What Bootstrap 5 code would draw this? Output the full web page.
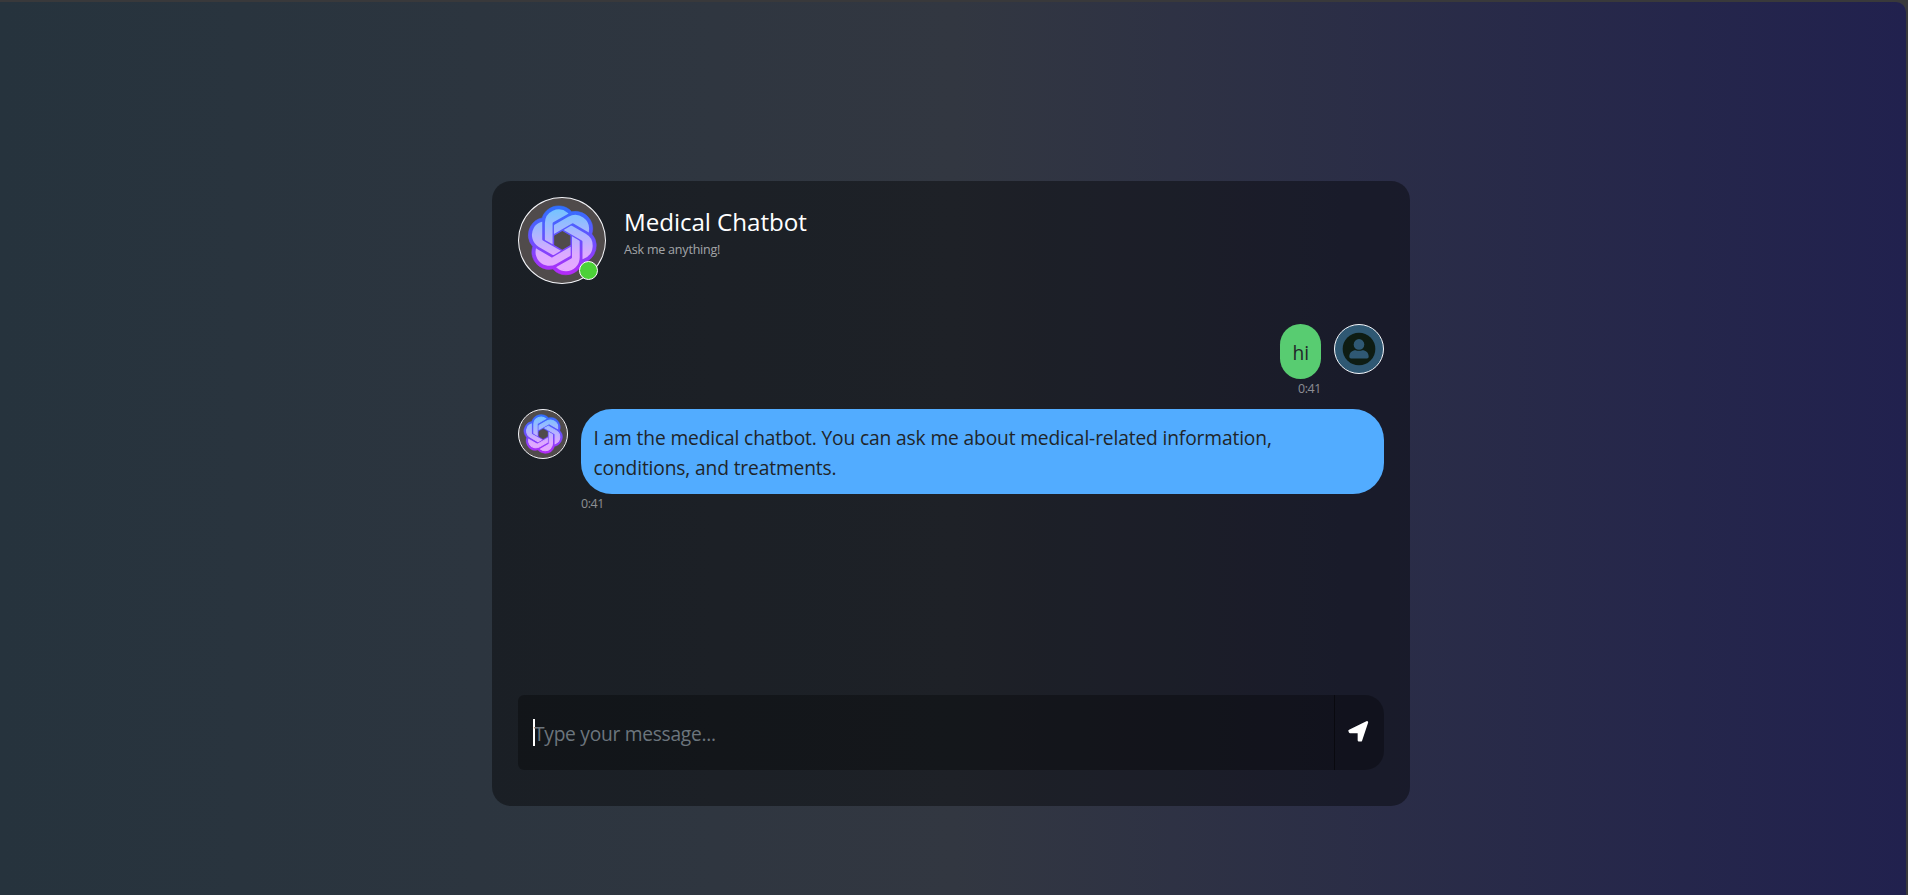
<!DOCTYPE html>
<html lang="en">
<head>
<meta charset="utf-8">
<title>Medical Chatbot</title>
<meta name="viewport" content="width=device-width, initial-scale=1">
<link rel="stylesheet" href="https://cdn.jsdelivr.net/npm/bootstrap@5.3.0/dist/css/bootstrap.min.css">
<style>
html,body{height:100%;overflow:hidden}
body{background:#39393b;font-family:"Open Sans","Noto Sans",sans-serif;color:#212529}
.page{height:895px;padding-top:2px;padding-right:2px}
.stage{height:893px;border-radius:0 10px 0 0;background:linear-gradient(to right,rgb(38,51,61),rgb(50,55,65),rgb(33,33,78));padding:179px 0 0 492px}
.chat{width:918px;height:625px;border-radius:19px;background:rgba(0,0,0,.4);border:0;padding:16px 26px 36px}
.av{border:1.5px solid #f5f6fa;border-radius:50%;background:#504b4b;overflow:hidden;flex:none;display:block}
.av-lg{width:88px;height:87px}
.av-sm{width:50px;height:50px}
.av-user{background:#2f5873}
.dot{position:absolute;right:8px;bottom:4px;width:19px;height:19px;border-radius:50%;background:#4cd137;border:1.5px solid #fff}
.heading{margin-left:18px}
.title{font-size:24.2px;line-height:30px;color:#fff;margin-top:10px;white-space:nowrap;letter-spacing:-.07px}
.sub{font-size:12.5px;line-height:18px;color:rgba(255,255,255,.6);margin-top:4px;letter-spacing:-.2px}
.row-me{margin-top:40px}
.row-bot{margin-top:12px}
.bubble{font-size:19.2px;line-height:30px;padding:13.5px 12.5px 11.5px;border-radius:31px;letter-spacing:-.135px;white-space:nowrap}
.me{background:#58cc71;margin-right:13px;width:41px}
.bot{background:#52acff;margin-left:13px;width:803px;height:85px}
.time{font-size:12.4px;line-height:18px;color:rgba(255,255,255,.5);letter-spacing:-.4px;height:18px;padding-top:1px}
.time-me{margin-right:13px}
.time-bot{margin-left:13px}
.inbox{height:75px;border-radius:6px 19px 19px 6px;background:rgba(0,0,0,.3);overflow:hidden}
.field{font-size:19.2px;color:#6c757d;padding:4px 0 0 15px;letter-spacing:-.27px}
.field .caret+span{margin-left:-1px}
.caret{width:2px;height:27px;background:#fff;margin-top:-5px}
.send{width:50px;border-left:1px solid rgba(0,0,0,.45)}
.send svg{margin:-3px 1px 0 0}
</style>
</head>
<body>
<svg width="0" height="0" class="position-absolute" aria-hidden="true">
<defs>
<linearGradient id="light" gradientUnits="userSpaceOnUse" x1="0" y1="0" x2="0" y2="24"><stop offset="0" stop-color="#6cc6ff"/><stop offset=".7" stop-color="#dcaaff"/><stop offset="1" stop-color="#eaa8ff"/></linearGradient>
<linearGradient id="dark" gradientUnits="userSpaceOnUse" x1="0" y1="0" x2="0" y2="24"><stop offset="0" stop-color="#2f70ff"/><stop offset=".5" stop-color="#6a50ff"/><stop offset="1" stop-color="#b52af8"/></linearGradient>
<symbol id="knot" viewBox="-2.9 -2.75 29.6 29.6">
<path fill="url(#dark)" stroke="url(#dark)" stroke-width=".2" d="M22.2819 9.8211a5.9847 5.9847 0 0 0-.5157-4.9108 6.0462 6.0462 0 0 0-6.5098-2.9A6.0651 6.0651 0 0 0 4.9807 4.1818a5.9847 5.9847 0 0 0-3.9977 2.9 6.0462 6.0462 0 0 0 .7427 7.0966 5.98 5.98 0 0 0 .511 4.9107 6.051 6.051 0 0 0 6.5146 2.9001A5.9847 5.9847 0 0 0 13.2599 24a6.0557 6.0557 0 0 0 5.7718-4.2058 5.9894 5.9894 0 0 0 3.9977-2.9001 6.0557 6.0557 0 0 0-.7475-7.0729z"/>
<path fill="url(#light)" stroke="url(#light)" stroke-width=".62" d="M13.2599 22.4292a4.4755 4.4755 0 0 1-2.8764-1.0408l.1419-.0804 4.7783-2.7582a.7948.7948 0 0 0 .3927-.6813v-6.7369l2.02 1.1686a.071.071 0 0 1 .038.052v5.5826a4.504 4.504 0 0 1-4.4945 4.4944zm-9.6607-4.1254a4.4708 4.4708 0 0 1-.5346-3.0137l.142.0852 4.783 2.7582a.7712.7712 0 0 0 .7806 0l5.8428-3.3685v2.3324a.0804.0804 0 0 1-.0332.0615L9.74 19.9502a4.4992 4.4992 0 0 1-6.1408-1.6464zM2.3408 7.8956a4.485 4.485 0 0 1 2.3655-1.9728V11.6a.7664.7664 0 0 0 .3879.6765l5.8144 3.3543-2.0201 1.1685a.0757.0757 0 0 1-.071 0l-4.8303-2.7865A4.504 4.504 0 0 1 2.3408 7.872zm16.5963 3.8558L13.1038 8.364 15.1192 7.2a.0757.0757 0 0 1 .071 0l4.8303 2.7913a4.4944 4.4944 0 0 1-.6765 8.1042v-5.6772a.79.79 0 0 0-.407-.667zm2.0107-3.0231l-.142-.0852-4.7735-2.7818a.7759.7759 0 0 0-.7854 0L9.409 9.2297V6.8974a.0662.0662 0 0 1 .0284-.0615l4.8303-2.7866a4.4992 4.4992 0 0 1 6.6802 4.66zM8.3065 12.863l-2.02-1.1638a.0804.0804 0 0 1-.038-.0567V6.0742a4.4992 4.4992 0 0 1 7.3757-3.4537l-.142.0805L8.704 5.459a.7948.7948 0 0 0-.3927.6813z"/>
<path fill="#504b4b" stroke="#504b4b" stroke-width=".45" d="M9.4041 10.4976l2.602-1.4998 2.6069 1.4998v2.9994l-2.5974 1.4997-2.6067-1.4997Z"/>
</symbol>
</defs>
</svg>
<div class="page"><main class="stage">
<section class="chat d-flex flex-column">
<header class="d-flex align-items-start">
<div class="position-relative"><div class="av av-lg"><svg class="d-block w-100 h-100"><use href="#knot"/></svg></div><span class="dot"></span></div>
<div class="heading"><div class="title">Medical Chatbot</div><div class="sub">Ask me anything!</div></div>
</header>
<div class="row-me d-flex justify-content-end align-items-start">
<div class="d-flex flex-column"><div class="bubble me">hi</div><div class="time time-me text-end">0:41</div></div>
<div class="av av-sm av-user"><svg class="d-block w-100 h-100" viewBox="0 0 47 47"><circle cx="23.5" cy="23.5" r="16" fill="#0e1c13"/><circle cx="23.5" cy="19" r="5.2" fill="#2f5873"/><path fill="#2f5873" d="M14 31c0-4 2.800-6.300 6.300-6.300 1.200.8 5.200.8 6.400 0 3.500 0 6.300 2.300 6.300 6.300q0 1.700-1.700 1.700h-15.600q-1.700 0-1.700-1.700z"/></svg></div>
</div>
<div class="row-bot d-flex align-items-start">
<div class="av av-sm"><svg class="d-block w-100 h-100"><use href="#knot"/></svg></div>
<div><div class="bubble bot">I am the medical chatbot. You can ask me about medical-related information,<br>conditions, and treatments.</div><div class="time time-bot">0:41</div></div>
</div>
<div class="inbox d-flex mt-auto">
<div class="field flex-grow-1 d-flex align-items-center"><span class="caret"></span><span>Type your message...</span></div>
<div class="send d-flex align-items-center justify-content-center"><svg width="22" height="22" viewBox="0 0 22 22"><path d="M1.600 10.800 18.900 2.300 12.900 20.300 10.900 20.300V12H2.100Z" fill="#fff" stroke="#fff" stroke-width="2.500" stroke-linejoin="round"/></svg></div>
</div>
</section>
</main></div>
<script src="https://cdn.jsdelivr.net/npm/bootstrap@5.3.0/dist/js/bootstrap.bundle.min.js"></script>
</body>
</html>
